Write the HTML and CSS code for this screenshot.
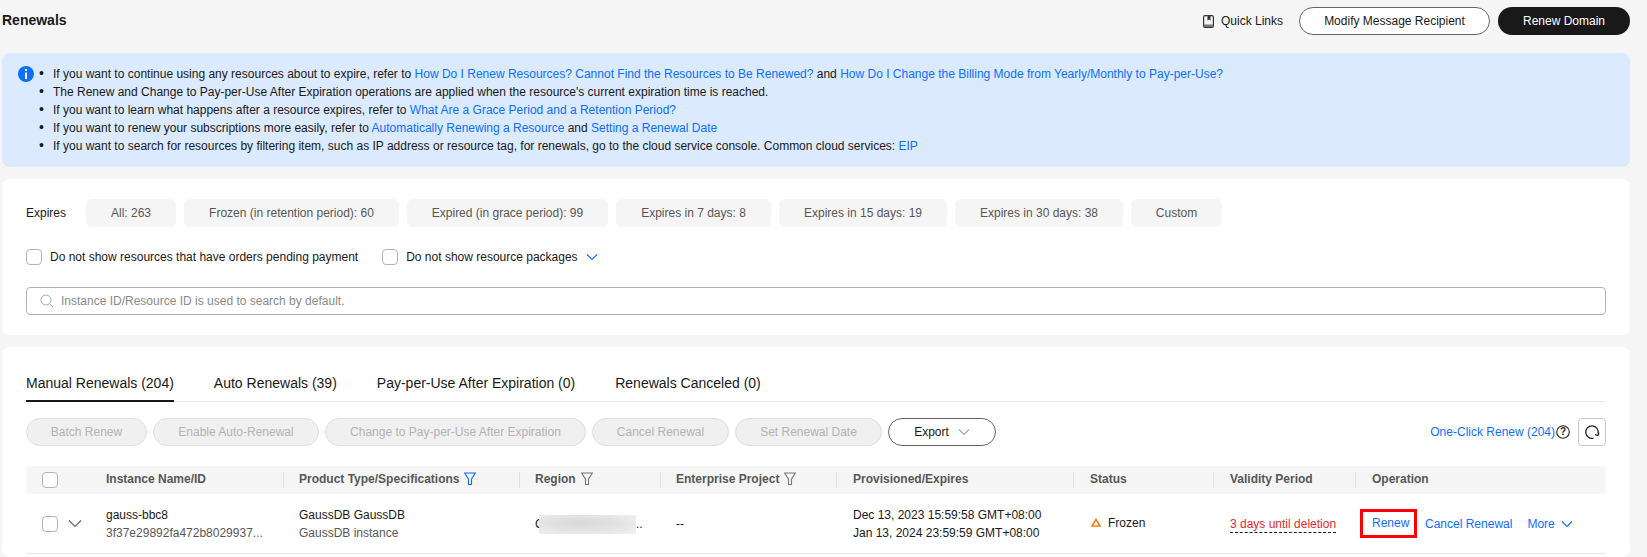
FILE: index.html
```html
<!DOCTYPE html>
<html lang="en">
<head>
<meta charset="utf-8">
<title>Renewals</title>
<link rel="stylesheet" href="styles.css">
</head>
<body>
<div class="page">
  <header class="top">
    <h1 class="title">Renewals</h1>
    <div class="top-actions">
      <a class="quick"><svg class="quick-icon" viewBox="0 0 11 13" width="11" height="13"><rect x=".6" y=".6" width="9.800" height="11.800" rx="1.500" fill="none" stroke="#333" stroke-width="1.200"/><path d="M1 9.500h9V11a1 1 0 0 1-1 1H2a1 1 0 0 1-1-1z" fill="#777"/><path d="M4.500 1h3v4.500L6 4.400 4.500 5.500z" fill="#333"/></svg>Quick Links</a>
      <button class="btn btn-outline btn-modify">Modify Message Recipient</button>
      <button class="btn btn-dark">Renew Domain</button>
    </div>
  </header>

  <section class="notice">
    <svg class="info" viewBox="0 0 16 16" width="16" height="16"><circle cx="8" cy="8" r="8" fill="#0d6eff"/><rect x="7" y="3" width="2" height="2" fill="#fff"/><rect x="7" y="6.500" width="2" height="6.500" fill="#fff"/></svg>
    <ul class="notice-list">
      <li>If you want to continue using any resources about to expire, refer to <a>How Do I Renew Resources? Cannot Find the Resources to Be Renewed?</a> and <a>How Do I Change the Billing Mode from Yearly/Monthly to Pay-per-Use?</a></li>
      <li>The Renew and Change to Pay-per-Use After Expiration operations are applied when the resource's current expiration time is reached.</li>
      <li>If you want to learn what happens after a resource expires, refer to <a>What Are a Grace Period and a Retention Period?</a></li>
      <li>If you want to renew your subscriptions more easily, refer to <a>Automatically Renewing a Resource</a> and <a>Setting a Renewal Date</a></li>
      <li>If you want to search for resources by filtering item, such as IP address or resource tag, for renewals, go to the cloud service console. Common cloud services: <a>EIP</a></li>
    </ul>
  </section>

  <section class="card filter">
    <div class="pills">
      <span class="pill-label">Expires</span>
      <span class="pill p1">All: 263</span>
      <span class="pill p2">Frozen (in retention period): 60</span>
      <span class="pill p3">Expired (in grace period): 99</span>
      <span class="pill p4">Expires in 7 days: 8</span>
      <span class="pill p5">Expires in 15 days: 19</span>
      <span class="pill p6">Expires in 30 days: 38</span>
      <span class="pill p7">Custom</span>
    </div>
    <div class="checks">
      <label class="check"><span class="box"></span>Do not show resources that have orders pending payment</label>
      <label class="check"><span class="box"></span>Do not show resource packages<svg class="chev-blue" viewBox="0 0 12 8" width="12" height="8"><path d="M1 1.500l5 5 5-5" fill="none" stroke="#0d6eff" stroke-width="1.100"/></svg></label>
    </div>
    <div class="search">
      <svg viewBox="0 0 14 14" width="14" height="14"><circle cx="6" cy="6" r="5" fill="none" stroke="#aaa" stroke-width="1"/><path d="M9.500 9.500l3.500 3.500" stroke="#aaa" stroke-width="1"/></svg>
      <span>Instance ID/Resource ID is used to search by default.</span>
    </div>
  </section>

  <section class="card list">
    <nav class="tabs">
      <a class="tab active">Manual Renewals (204)</a>
      <a class="tab">Auto Renewals (39)</a>
      <a class="tab">Pay-per-Use After Expiration (0)</a>
      <a class="tab">Renewals Canceled (0)</a>
    </nav>
    <div class="toolbar">
      <button class="btn btn-off b1">Batch Renew</button>
      <button class="btn btn-off b2">Enable Auto-Renewal</button>
      <button class="btn btn-off b3">Change to Pay-per-Use After Expiration</button>
      <button class="btn btn-off b4">Cancel Renewal</button>
      <button class="btn btn-off b5">Set Renewal Date</button>
      <button class="btn btn-outline b6">Export<svg viewBox="0 0 12 8" width="12" height="8"><path d="M1 1.500l5 5 5-5" fill="none" stroke="#666" stroke-width="1"/></svg></button>
      <div class="toolbar-right">
        <a class="link">One-Click Renew (204)</a>
        <svg class="help" viewBox="0 0 14 14" width="14" height="14"><circle cx="7" cy="7" r="6.300" fill="none" stroke="#222" stroke-width="1.100"/><text x="7" y="10.300" text-anchor="middle" class="help-q">?</text></svg>
        <button class="refresh"><svg viewBox="0 0 16 16" width="16" height="16"><path d="M9.500 14.100A6.200 6.200 0 1 1 14 9.500" fill="none" stroke="#222" stroke-width="1.200"/><path d="M15 8.500l-1 3-3-.8" fill="none" stroke="#222" stroke-width="1.200"/></svg></button>
      </div>
    </div>
    <div class="grid head">
      <div class="c-sel"><span class="box"></span></div>
      <div class="c c-name">Instance Name/ID</div>
      <div class="c c-type">Product Type/Specifications<svg class="funnel" viewBox="0 0 12 14" width="12" height="14"><path d="M.7 1h10.600L7.500 7.200v5.300h-3V7.200z" fill="none" stroke="#0d6eff" stroke-width="1.100"/></svg></div>
      <div class="c c-region">Region<svg class="funnel" viewBox="0 0 12 14" width="12" height="14"><path d="M.7 1h10.600L7.500 7.200v5.300h-3V7.200z" fill="none" stroke="#777" stroke-width="1.100"/></svg></div>
      <div class="c c-proj">Enterprise Project<svg class="funnel" viewBox="0 0 12 14" width="12" height="14"><path d="M.7 1h10.600L7.500 7.200v5.300h-3V7.200z" fill="none" stroke="#777" stroke-width="1.100"/></svg></div>
      <div class="c c-date">Provisioned/Expires</div>
      <div class="c c-status">Status</div>
      <div class="c c-valid">Validity Period</div>
      <div class="c c-op">Operation</div>
    </div>
    <div class="grid row">
      <div class="c-sel"><span class="box"></span><svg viewBox="0 0 14 9" width="14" height="9"><path d="M1 1.500l6 6 6-6" fill="none" stroke="#666" stroke-width="1.200"/></svg></div>
      <div class="c c-name"><div>gauss-bbc8</div><div class="sub">3f37e29892fa472b8029937...</div></div>
      <div class="c c-type"><div>GaussDB GaussDB</div><div class="sub">GaussDB instance</div></div>
      <div class="c c-region"><span class="region-text">C</span><span class="blur"></span><span>..</span></div>
      <div class="c c-proj">--</div>
      <div class="c c-date"><div>Dec 13, 2023 15:59:58 GMT+08:00</div><div>Jan 13, 2024 23:59:59 GMT+08:00</div></div>
      <div class="c c-status status"><svg class="warn" viewBox="0 0 10 9" width="10" height="9"><path d="M5 1.500L9 8H1z" fill="none" stroke="#f5811f" stroke-width="1.700"/></svg>Frozen</div>
      <div class="c c-valid"><span class="danger">3 days until deletion</span></div>
      <div class="c c-op ops"><a class="link renew">Renew</a><a class="link">Cancel Renewal</a><a class="link more">More<svg viewBox="0 0 12 8" width="12" height="8"><path d="M1 1.500l5 5 5-5" fill="none" stroke="#0d6eff" stroke-width="1.100"/></svg></a></div>
    </div>
  </section>
</div>
</body>
</html>
```

FILE: styles.css
```css
* { box-sizing: border-box; }
html, body { margin: 0; height: 100%; }
body {
  background: #f5f5f5;
  font-family: "Liberation Sans", Arial, sans-serif;
  font-size: 12px;
  color: #191919;
  overflow: hidden;
}
.page { width: 1628px; margin-left: 2px; }
a { text-decoration: none; }
.notice a, .link { color: #0d6eff; }

.top { height: 53px; display: flex; justify-content: space-between; padding-top: 7px; }
.title { margin: 0; font-size: 14px; line-height: 26px; font-weight: 700; }
.top-actions { display: flex; align-items: flex-start; gap: 8px; }
.quick { display: flex; align-items: center; height: 28px; margin-right: 8px; gap: 7px; }

.btn {
  height: 28px;
  border-radius: 14px;
  font: 12px "Liberation Sans", Arial, sans-serif;
  padding: 0;
  border: 1px solid transparent;
}
.btn-outline { background: #fff; border-color: #666; color: #191919; }
.btn-dark { background: #191919; color: #fff; width: 132px; }
.btn-modify { width: 191px; }
.btn-off { background: #f0f0f0; border-color: #dfdfdf; color: #b3b3b3; }

.notice {
  height: 114px;
  background: #dbeafe;
  border-radius: 8px;
  display: flex;
  padding: 12px 0 0 16px;
}
.info { flex: none; margin-top: 1px; }
.notice-list { margin: 0; padding: 0 0 0 19px; list-style: none; line-height: 18px; }
.notice-list li::before {
  content: "\2022";
  display: inline-block;
  width: 14px;
  margin-left: -14px;
  font-size: 14px;
  line-height: 14px;
}

.card { background: #fff; border-radius: 8px; }
.filter { height: 156px; margin-top: 12px; padding: 20px 24px 0; }
.pills { display: flex; gap: 8px; align-items: center; }
.pill-label { width: 52px; }
.pill {
  height: 28px;
  line-height: 28px;
  background: #f5f5f5;
  border-radius: 6px;
  color: #575757;
  text-align: center;
}
.p1 { width: 90px; } .p2 { width: 215px; } .p3 { width: 201px; } .p4 { width: 155px; }
.p5 { width: 168px; } .p6 { width: 168px; } .p7 { width: 91px; }

.checks { display: flex; gap: 24px; margin-top: 22px; height: 16px; }
.check { display: flex; align-items: center; gap: 8px; }
.box {
  display: inline-block;
  width: 16px;
  height: 16px;
  border: 1px solid #b3b3b3;
  border-radius: 4px;
  background: #fff;
  flex: none;
}
.search {
  display: flex;
  align-items: center;
  gap: 7px;
  margin-top: 22px;
  height: 28px;
  border: 1px solid #b3b3b3;
  border-radius: 4px;
  padding-left: 13px;
  color: #8a8a8a;
}

.list { margin-top: 12px; height: 210px; padding: 0 24px; }
.tabs { display: flex; gap: 40px; height: 55px; padding-top: 27px; border-bottom: 1px solid #e6e6e6; }
.tab { font-size: 14px; line-height: 18px; height: 28px; color: #191919; }
.tab.active { border-bottom: 2px solid #191919; }
.toolbar { display: flex; gap: 6px; margin-top: 16px; }
.b1 { width: 121px; } .b2 { width: 166px; } .b3 { width: 261px; } .b4 { width: 137px; } .b5 { width: 147px; }
.b6 { width: 108px; display: flex; align-items: center; justify-content: center; gap: 9px; }
.toolbar-right { margin-left: auto; display: flex; align-items: center; }
.help { margin: 0 8px 0 1px; }
.help-q { font-size: 10px; fill: #222; font-weight: 700; }
.refresh {
  width: 28px;
  height: 28px;
  background: #fff;
  border: 1px solid #c7c7c7;
  border-radius: 4px;
  padding: 0;
  display: flex;
  align-items: center;
  justify-content: center;
}

.grid {
  display: grid;
  grid-template-columns: 64px 193px 236px 141px 176px 237px 140px 142px 1fr;
}
.head { height: 28px; margin-top: 20px; background: #f5f5f5; color: #575757; font-weight: 700; align-items: center; }
.head .c { position: relative; padding-left: 16px; padding-bottom: 2px; display: flex; align-items: center; white-space: nowrap; }
.head .c:not(.c-name)::before {
  content: "";
  position: absolute;
  left: 0;
  top: 0;
  bottom: 0;
  width: 1px;
  background: #dfdfdf;
}
.head .c-type::before, .head .c-region::before { left: -1px; }
.c-sel { padding-left: 16px; display: flex; align-items: center; gap: 10px; }
.funnel { margin-left: 5px; }
.row { height: 60px; align-items: center; border-bottom: 1px solid #e6e6e6; line-height: 18px; }
.c { padding-left: 16px; }
.sub { color: #575757; }
.c-date, .c-status, .c-valid, .c-op { padding-left: 17px !important; }
.c-region { display: flex; align-items: center; position: relative; }
.row .c-region { white-space: nowrap; }
.region-text { width: 101px; }
.blur {
  position: absolute;
  left: 20px;
  top: 50%;
  width: 97px;
  height: 19px;
  margin-top: -9px;
  background: radial-gradient(ellipse at 45% 45%, #d8d8d8 0%, #e2e2e2 45%, #f3f3f3 100%);
}
.status { display: flex; align-items: center; gap: 7px; margin-top: -2px; }
.warn { margin-left: 1px; }
.danger { color: #e6282d; border-bottom: 1px dashed #191919; padding-bottom: 1px; }
.ops { display: flex; align-items: center; gap: 8px; padding-left: 5px !important; }
.renew { border: 3px solid #f00; width: 57px; height: 29px; line-height: 23px; padding-left: 9px; }
.more { display: inline-flex; align-items: center; gap: 6px; margin-left: 7px; }
```
